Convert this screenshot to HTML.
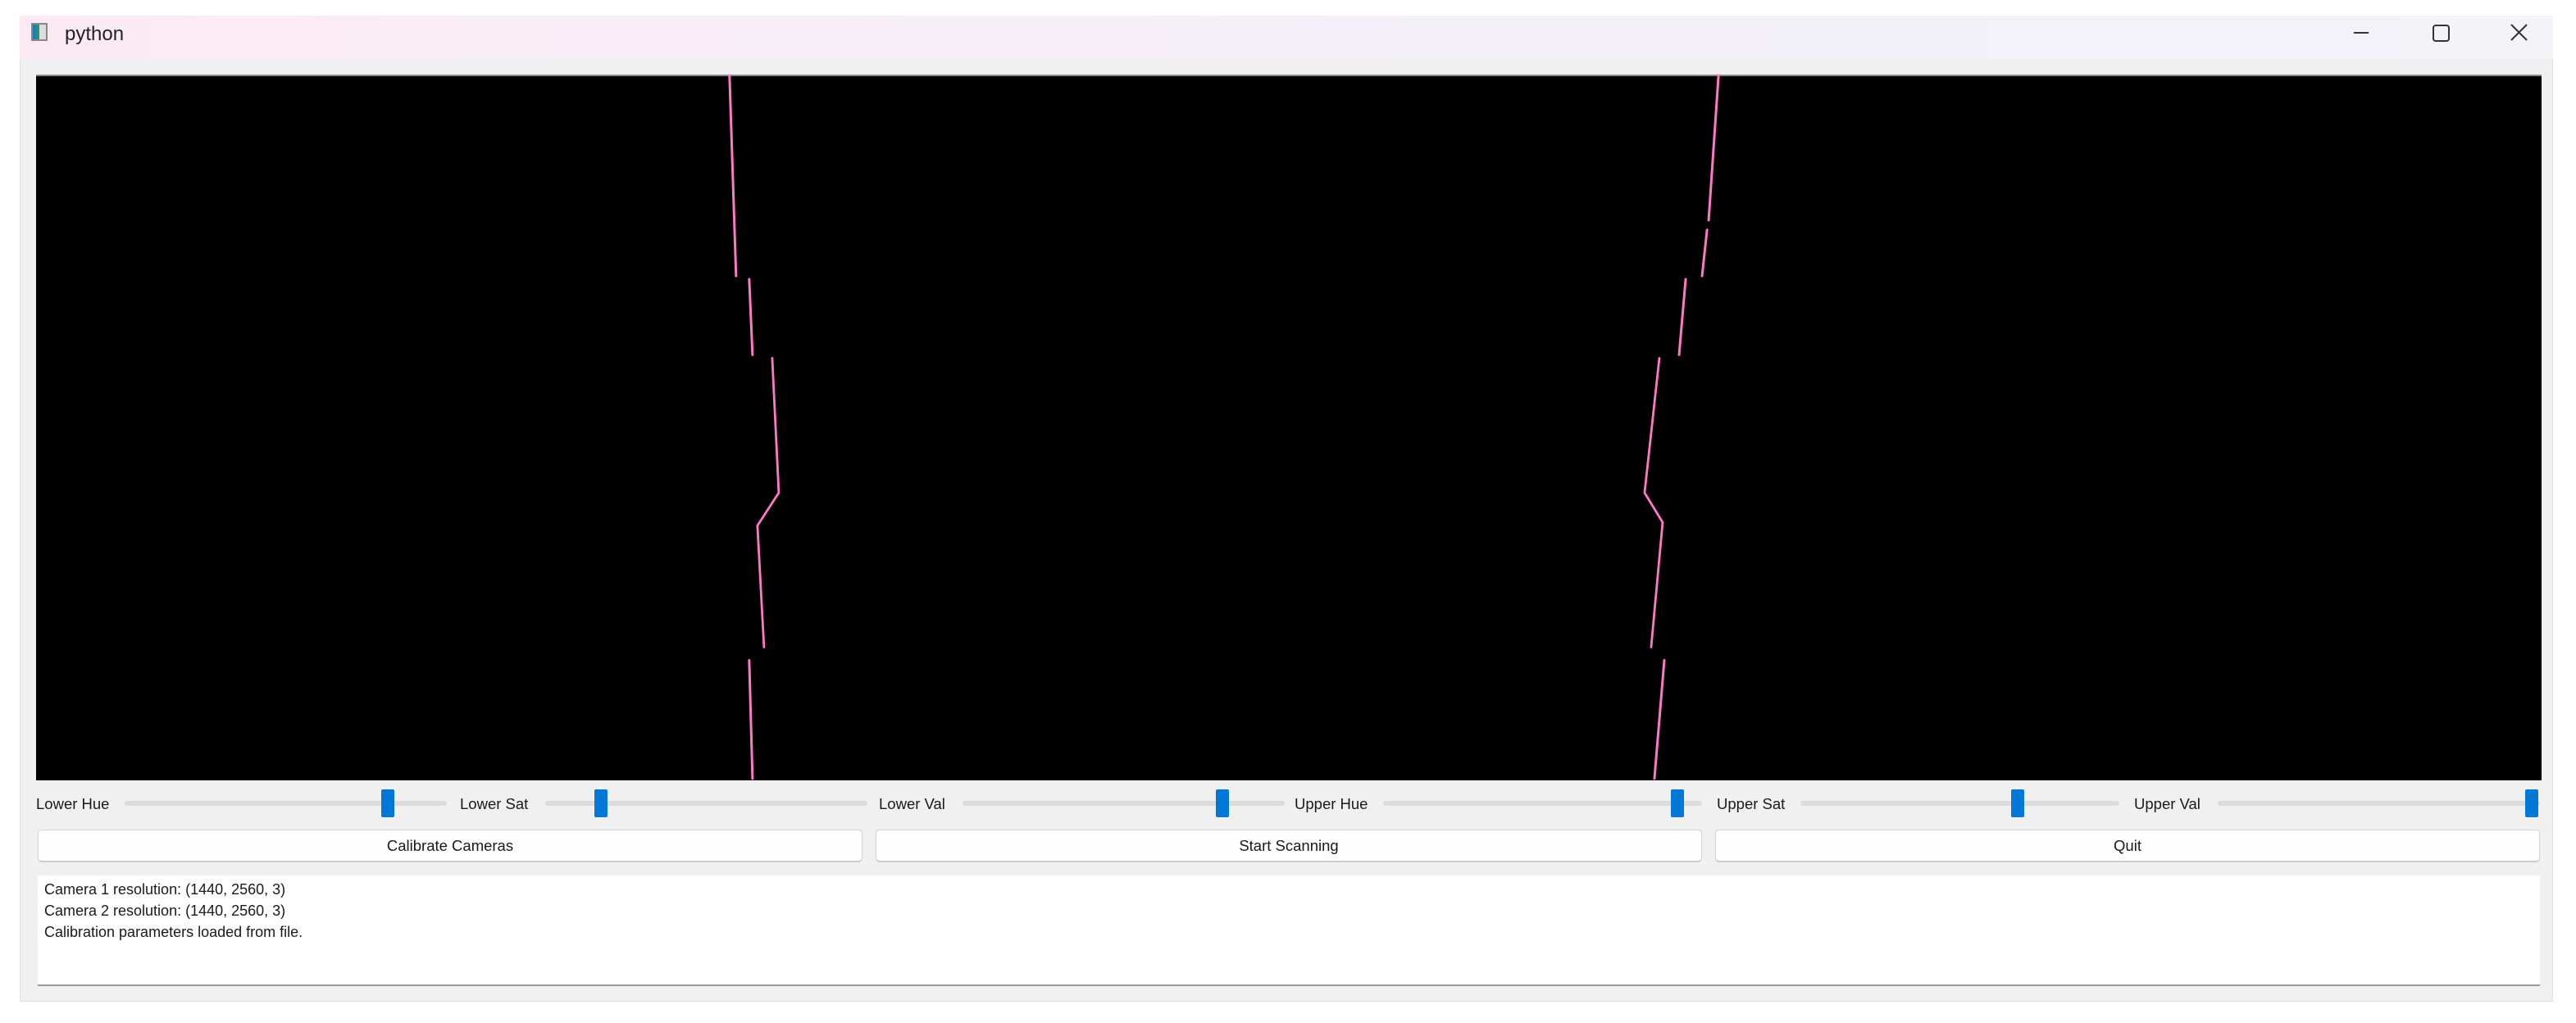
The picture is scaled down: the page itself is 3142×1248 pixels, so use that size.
<!DOCTYPE html>
<html><head><meta charset="utf-8"><style>
*{margin:0;padding:0;box-sizing:border-box}
body{width:3142px;height:1248px;background:#fff;position:relative;overflow:hidden;font-family:"Liberation Sans",sans-serif;color:#1a1a1a}
.win{position:absolute;left:24px;top:19px;width:3090px;height:1203px;background:#f0f0f0;border:1px solid #e0e0e0}
.title{position:absolute;left:24px;top:19px;width:3090px;height:53px;background:linear-gradient(90deg,#fbeaf4,#f3f0f8 60%,#f3f3f8)}
.ttext{position:absolute;left:79px;top:28px;font-size:24px;color:#222}
.icon{position:absolute;left:38px;top:28px;width:20px;height:22px;border:2px solid #888;background:linear-gradient(90deg,#1a7ac0 0,#2a9a6a 50%,#ddd 50%)}
.black{position:absolute;left:44px;top:91px;width:3056px;height:861px;background:#000;border-top:2px solid #888}
.lbl{position:absolute;top:970px;font-size:18.5px}
.trk{position:absolute;top:977px;height:6px;background:#dcdcdc;border-radius:3px}
.hd{position:absolute;top:963px;width:16px;height:34px;background:#0078d7;border-radius:2px}
.btn{position:absolute;top:1012px;height:40px;background:#fdfdfd;border:1px solid #d4d4d4;border-bottom:2px solid #ccc;border-radius:5px;font-size:18.5px;text-align:center;line-height:38px}
.ta{position:absolute;left:46px;top:1068px;width:3052px;height:135px;background:#fff;border-bottom:2px solid #999;font-size:18px;line-height:26px;padding:4px 8px}
</style></head><body>
<div class="win"></div>
<div class="title"></div>
<div class="icon"></div>
<div class="ttext">python</div>
<svg style="position:absolute;left:0;top:0" width="3142" height="80">
<line x1="2871" y1="40" x2="2889" y2="40" stroke="#333" stroke-width="2"/>
<rect x="2968" y="31" width="19" height="19" rx="3" fill="none" stroke="#333" stroke-width="2"/>
<path d="M3063 30 L3082 49 M3082 30 L3063 49" stroke="#333" stroke-width="2"/>
</svg>
<div class="black"></div>
<svg style="position:absolute;left:0;top:0" width="3142" height="1248" viewBox="0 0 1567.9 622.8">
<g stroke="#ff78c8" stroke-width="1.5" fill="none" stroke-linecap="round">
<line x1="444" y1="46" x2="448" y2="168"/>
<line x1="456" y1="170" x2="458" y2="216"/>
<polyline points="470,218 474,300 461,320 465,394" stroke-width="1.4"/>
<line x1="456" y1="402" x2="458" y2="474"/>
<line x1="1046" y1="46" x2="1040" y2="134"/>
<line x1="1039" y1="140" x2="1036" y2="168"/>
<line x1="1026" y1="170" x2="1022" y2="216"/>
<polyline points="1010,218 1001,300 1012,318 1005,394" stroke-width="1.4"/>
<line x1="1013" y1="402" x2="1007" y2="474"/>
</g></svg>
<div class="lbl" style="left:44px">Lower Hue</div>
<div class="trk" style="left:152px;width:393px"></div>
<div class="hd" style="left:465px"></div>
<div class="lbl" style="left:561px">Lower Sat</div>
<div class="trk" style="left:665px;width:393px"></div>
<div class="hd" style="left:725px"></div>
<div class="lbl" style="left:1072px">Lower Val</div>
<div class="trk" style="left:1174px;width:393px"></div>
<div class="hd" style="left:1483px"></div>
<div class="lbl" style="left:1579px">Upper Hue</div>
<div class="trk" style="left:1687px;width:389px"></div>
<div class="hd" style="left:2038px"></div>
<div class="lbl" style="left:2094px">Upper Sat</div>
<div class="trk" style="left:2196px;width:389px"></div>
<div class="hd" style="left:2453px"></div>
<div class="lbl" style="left:2603px">Upper Val</div>
<div class="trk" style="left:2705px;width:393px"></div>
<div class="hd" style="left:3080px"></div>
<div class="btn" style="left:46px;width:1006px">Calibrate Cameras</div>
<div class="btn" style="left:1068px;width:1008px">Start Scanning</div>
<div class="btn" style="left:2092px;width:1006px">Quit</div>
<div class="ta">Camera 1 resolution: (1440, 2560, 3)<br>Camera 2 resolution: (1440, 2560, 3)<br>Calibration parameters loaded from file.</div>
</body></html>
